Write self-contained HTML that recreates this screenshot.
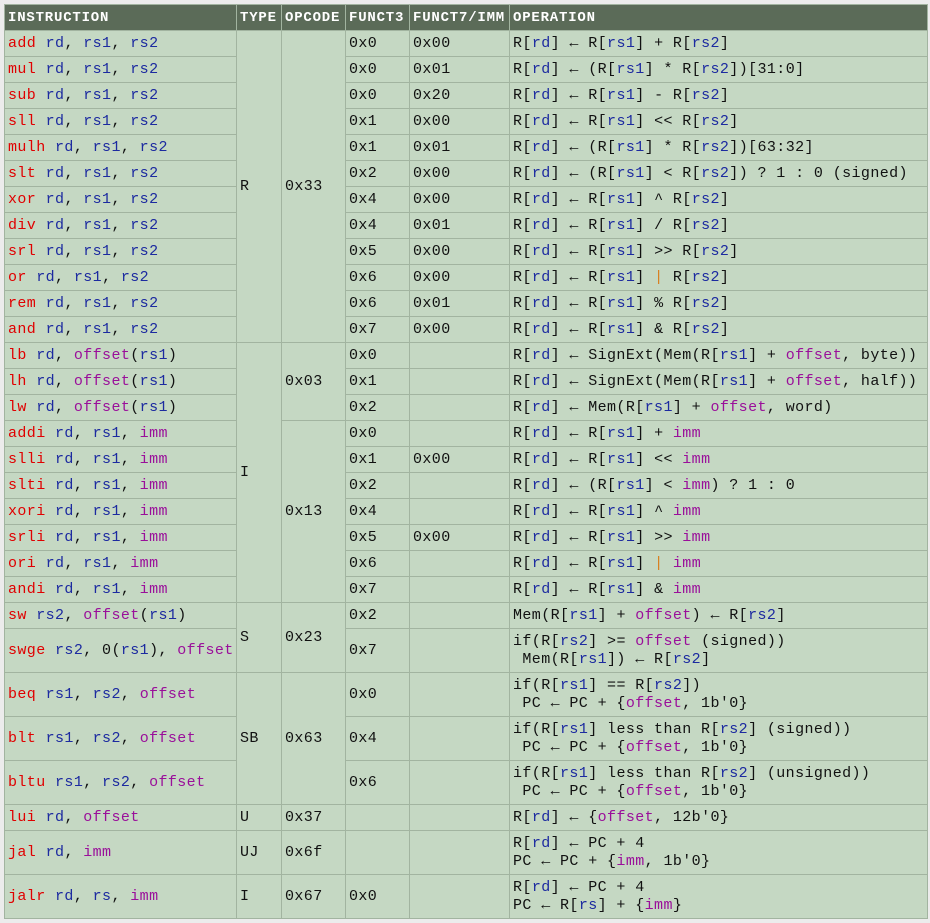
<!DOCTYPE html>
<html><head><meta charset="utf-8"><style>
body{margin:0;background:#ececec;width:930px;height:923px;overflow:hidden;font-family:"Liberation Mono","DejaVu Sans Mono",monospace;}
table{position:absolute;left:4px;top:4px;border-collapse:collapse;table-layout:fixed;width:923px;background:#c5d8c3;}
td,th{border:1px solid #a2b4a0;padding:0 0 0 3px;font-size:15px;letter-spacing:0.4px;color:#111;white-space:pre;vertical-align:middle;overflow:hidden;}
th{background:#5b6b58;color:#fff;font-weight:bold;font-size:14px;letter-spacing:0.8px;text-align:left;height:24px;border-color:#a2b4a0;}
tr{height:26px}
tr.t{height:44px}
td{line-height:18px}
.i{color:#e00000}.b{color:#1c2aa0}.p{color:#9a0f9a}.o{color:#d88020}
</style></head><body>
<table>
<colgroup><col style="width:232px"><col style="width:45px"><col style="width:64px"><col style="width:64px"><col style="width:100px"><col style="width:418px"></colgroup>
<tr><th>INSTRUCTION</th><th>TYPE</th><th>OPCODE</th><th>FUNCT3</th><th>FUNCT7/IMM</th><th>OPERATION</th></tr>
<tr><td><span class="i">add</span> <span class="b">rd</span>, <span class="b">rs1</span>, <span class="b">rs2</span></td><td rowspan="12">R</td><td rowspan="12">0x33</td><td>0x0</td><td>0x00</td><td>R[<span class="b">rd</span>] ← R[<span class="b">rs1</span>] + R[<span class="b">rs2</span>]</td></tr>
<tr><td><span class="i">mul</span> <span class="b">rd</span>, <span class="b">rs1</span>, <span class="b">rs2</span></td><td>0x0</td><td>0x01</td><td>R[<span class="b">rd</span>] ← (R[<span class="b">rs1</span>] * R[<span class="b">rs2</span>])[31:0]</td></tr>
<tr><td><span class="i">sub</span> <span class="b">rd</span>, <span class="b">rs1</span>, <span class="b">rs2</span></td><td>0x0</td><td>0x20</td><td>R[<span class="b">rd</span>] ← R[<span class="b">rs1</span>] - R[<span class="b">rs2</span>]</td></tr>
<tr><td><span class="i">sll</span> <span class="b">rd</span>, <span class="b">rs1</span>, <span class="b">rs2</span></td><td>0x1</td><td>0x00</td><td>R[<span class="b">rd</span>] ← R[<span class="b">rs1</span>] &lt;&lt; R[<span class="b">rs2</span>]</td></tr>
<tr><td><span class="i">mulh</span> <span class="b">rd</span>, <span class="b">rs1</span>, <span class="b">rs2</span></td><td>0x1</td><td>0x01</td><td>R[<span class="b">rd</span>] ← (R[<span class="b">rs1</span>] * R[<span class="b">rs2</span>])[63:32]</td></tr>
<tr><td><span class="i">slt</span> <span class="b">rd</span>, <span class="b">rs1</span>, <span class="b">rs2</span></td><td>0x2</td><td>0x00</td><td>R[<span class="b">rd</span>] ← (R[<span class="b">rs1</span>] &lt; R[<span class="b">rs2</span>]) ? 1 : 0 (signed)</td></tr>
<tr><td><span class="i">xor</span> <span class="b">rd</span>, <span class="b">rs1</span>, <span class="b">rs2</span></td><td>0x4</td><td>0x00</td><td>R[<span class="b">rd</span>] ← R[<span class="b">rs1</span>] ^ R[<span class="b">rs2</span>]</td></tr>
<tr><td><span class="i">div</span> <span class="b">rd</span>, <span class="b">rs1</span>, <span class="b">rs2</span></td><td>0x4</td><td>0x01</td><td>R[<span class="b">rd</span>] ← R[<span class="b">rs1</span>] / R[<span class="b">rs2</span>]</td></tr>
<tr><td><span class="i">srl</span> <span class="b">rd</span>, <span class="b">rs1</span>, <span class="b">rs2</span></td><td>0x5</td><td>0x00</td><td>R[<span class="b">rd</span>] ← R[<span class="b">rs1</span>] &gt;&gt; R[<span class="b">rs2</span>]</td></tr>
<tr><td><span class="i">or</span> <span class="b">rd</span>, <span class="b">rs1</span>, <span class="b">rs2</span></td><td>0x6</td><td>0x00</td><td>R[<span class="b">rd</span>] ← R[<span class="b">rs1</span>] <span class="o">|</span> R[<span class="b">rs2</span>]</td></tr>
<tr><td><span class="i">rem</span> <span class="b">rd</span>, <span class="b">rs1</span>, <span class="b">rs2</span></td><td>0x6</td><td>0x01</td><td>R[<span class="b">rd</span>] ← R[<span class="b">rs1</span>] % R[<span class="b">rs2</span>]</td></tr>
<tr><td><span class="i">and</span> <span class="b">rd</span>, <span class="b">rs1</span>, <span class="b">rs2</span></td><td>0x7</td><td>0x00</td><td>R[<span class="b">rd</span>] ← R[<span class="b">rs1</span>] &amp; R[<span class="b">rs2</span>]</td></tr>
<tr><td><span class="i">lb</span> <span class="b">rd</span>, <span class="p">offset</span>(<span class="b">rs1</span>)</td><td rowspan="10">I</td><td rowspan="3">0x03</td><td>0x0</td><td></td><td>R[<span class="b">rd</span>] ← SignExt(Mem(R[<span class="b">rs1</span>] + <span class="p">offset</span>, byte))</td></tr>
<tr><td><span class="i">lh</span> <span class="b">rd</span>, <span class="p">offset</span>(<span class="b">rs1</span>)</td><td>0x1</td><td></td><td>R[<span class="b">rd</span>] ← SignExt(Mem(R[<span class="b">rs1</span>] + <span class="p">offset</span>, half))</td></tr>
<tr><td><span class="i">lw</span> <span class="b">rd</span>, <span class="p">offset</span>(<span class="b">rs1</span>)</td><td>0x2</td><td></td><td>R[<span class="b">rd</span>] ← Mem(R[<span class="b">rs1</span>] + <span class="p">offset</span>, word)</td></tr>
<tr><td><span class="i">addi</span> <span class="b">rd</span>, <span class="b">rs1</span>, <span class="p">imm</span></td><td rowspan="7">0x13</td><td>0x0</td><td></td><td>R[<span class="b">rd</span>] ← R[<span class="b">rs1</span>] + <span class="p">imm</span></td></tr>
<tr><td><span class="i">slli</span> <span class="b">rd</span>, <span class="b">rs1</span>, <span class="p">imm</span></td><td>0x1</td><td>0x00</td><td>R[<span class="b">rd</span>] ← R[<span class="b">rs1</span>] &lt;&lt; <span class="p">imm</span></td></tr>
<tr><td><span class="i">slti</span> <span class="b">rd</span>, <span class="b">rs1</span>, <span class="p">imm</span></td><td>0x2</td><td></td><td>R[<span class="b">rd</span>] ← (R[<span class="b">rs1</span>] &lt; <span class="p">imm</span>) ? 1 : 0</td></tr>
<tr><td><span class="i">xori</span> <span class="b">rd</span>, <span class="b">rs1</span>, <span class="p">imm</span></td><td>0x4</td><td></td><td>R[<span class="b">rd</span>] ← R[<span class="b">rs1</span>] ^ <span class="p">imm</span></td></tr>
<tr><td><span class="i">srli</span> <span class="b">rd</span>, <span class="b">rs1</span>, <span class="p">imm</span></td><td>0x5</td><td>0x00</td><td>R[<span class="b">rd</span>] ← R[<span class="b">rs1</span>] &gt;&gt; <span class="p">imm</span></td></tr>
<tr><td><span class="i">ori</span> <span class="b">rd</span>, <span class="b">rs1</span>, <span class="p">imm</span></td><td>0x6</td><td></td><td>R[<span class="b">rd</span>] ← R[<span class="b">rs1</span>] <span class="o">|</span> <span class="p">imm</span></td></tr>
<tr><td><span class="i">andi</span> <span class="b">rd</span>, <span class="b">rs1</span>, <span class="p">imm</span></td><td>0x7</td><td></td><td>R[<span class="b">rd</span>] ← R[<span class="b">rs1</span>] &amp; <span class="p">imm</span></td></tr>
<tr><td><span class="i">sw</span> <span class="b">rs2</span>, <span class="p">offset</span>(<span class="b">rs1</span>)</td><td rowspan="2">S</td><td rowspan="2">0x23</td><td>0x2</td><td></td><td>Mem(R[<span class="b">rs1</span>] + <span class="p">offset</span>) ← R[<span class="b">rs2</span>]</td></tr>
<tr class="t"><td><span class="i">swge</span> <span class="b">rs2</span>, 0(<span class="b">rs1</span>), <span class="p">offset</span></td><td>0x7</td><td></td><td>if(R[<span class="b">rs2</span>] &gt;= <span class="p">offset</span> (signed))
 Mem(R[<span class="b">rs1</span>]) ← R[<span class="b">rs2</span>]</td></tr>
<tr class="t"><td><span class="i">beq</span> <span class="b">rs1</span>, <span class="b">rs2</span>, <span class="p">offset</span></td><td rowspan="3">SB</td><td rowspan="3">0x63</td><td>0x0</td><td></td><td>if(R[<span class="b">rs1</span>] == R[<span class="b">rs2</span>])
 PC ← PC + {<span class="p">offset</span>, 1b'0}</td></tr>
<tr class="t"><td><span class="i">blt</span> <span class="b">rs1</span>, <span class="b">rs2</span>, <span class="p">offset</span></td><td>0x4</td><td></td><td>if(R[<span class="b">rs1</span>] less than R[<span class="b">rs2</span>] (signed))
 PC ← PC + {<span class="p">offset</span>, 1b'0}</td></tr>
<tr class="t"><td><span class="i">bltu</span> <span class="b">rs1</span>, <span class="b">rs2</span>, <span class="p">offset</span></td><td>0x6</td><td></td><td>if(R[<span class="b">rs1</span>] less than R[<span class="b">rs2</span>] (unsigned))
 PC ← PC + {<span class="p">offset</span>, 1b'0}</td></tr>
<tr><td><span class="i">lui</span> <span class="b">rd</span>, <span class="p">offset</span></td><td>U</td><td>0x37</td><td></td><td></td><td>R[<span class="b">rd</span>] ← {<span class="p">offset</span>, 12b'0}</td></tr>
<tr class="t"><td><span class="i">jal</span> <span class="b">rd</span>, <span class="p">imm</span></td><td>UJ</td><td>0x6f</td><td></td><td></td><td>R[<span class="b">rd</span>] ← PC + 4
PC ← PC + {<span class="p">imm</span>, 1b'0}</td></tr>
<tr class="t"><td><span class="i">jalr</span> <span class="b">rd</span>, <span class="b">rs</span>, <span class="p">imm</span></td><td>I</td><td>0x67</td><td>0x0</td><td></td><td>R[<span class="b">rd</span>] ← PC + 4
PC ← R[<span class="b">rs</span>] + {<span class="p">imm</span>}</td></tr>
</table>
</body></html>
